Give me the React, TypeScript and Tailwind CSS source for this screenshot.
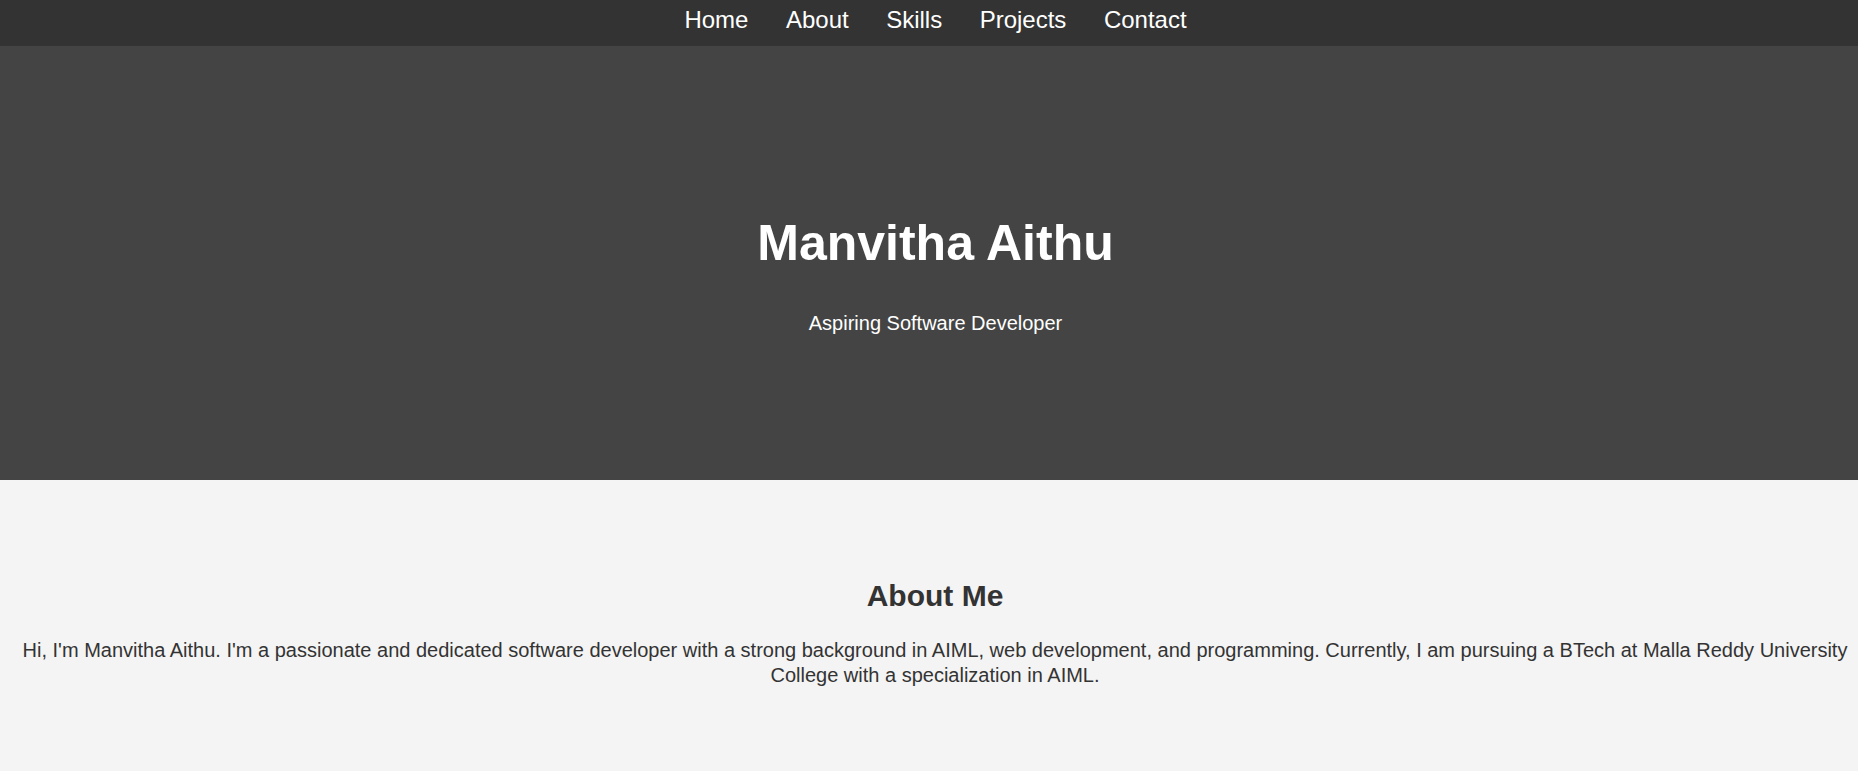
import React from "react";

const links = ["Home", "About", "Skills", "Projects", "Contact"];

export default function App() {
  return (
    <div className="min-h-screen bg-[#f4f4f4] font-['Liberation_Sans',Arial,sans-serif]">
      {/* top nav */}
      <nav className="flex h-[46px] items-start justify-center bg-[#333333] pt-[6px] pl-[13px]">
        {links.map((l) => (
          <a key={l} href="#" className="mx-[18.75px] text-[24px] leading-[28px] text-white">
            {l}
          </a>
        ))}
      </nav>

      {/* hero */}
      <header className="h-[434px] bg-[#444444] pt-[169px] pl-[13px] text-center text-white">
        <h1 className="text-[50px] font-bold leading-[57px]">Manvitha Aithu</h1>
        <p className="mt-[40px] text-[20px] leading-[23px]">Aspiring Software Developer</p>
      </header>

      {/* about */}
      <section className="pt-[99px] pr-[8px] pb-[60px] pl-[20px] text-center text-[#333333]">
        <h2 className="text-[30px] font-bold leading-[34px]">About Me</h2>
        <p className="mt-[25px] text-[20px] leading-[25px]">
          Hi, I'm Manvitha Aithu. I'm a passionate and dedicated software developer with a strong
          background in AIML, web development, and programming. Currently, I am pursuing a BTech at
          Malla Reddy University College with a specialization in AIML.
        </p>
      </section>
    </div>
  );
}
